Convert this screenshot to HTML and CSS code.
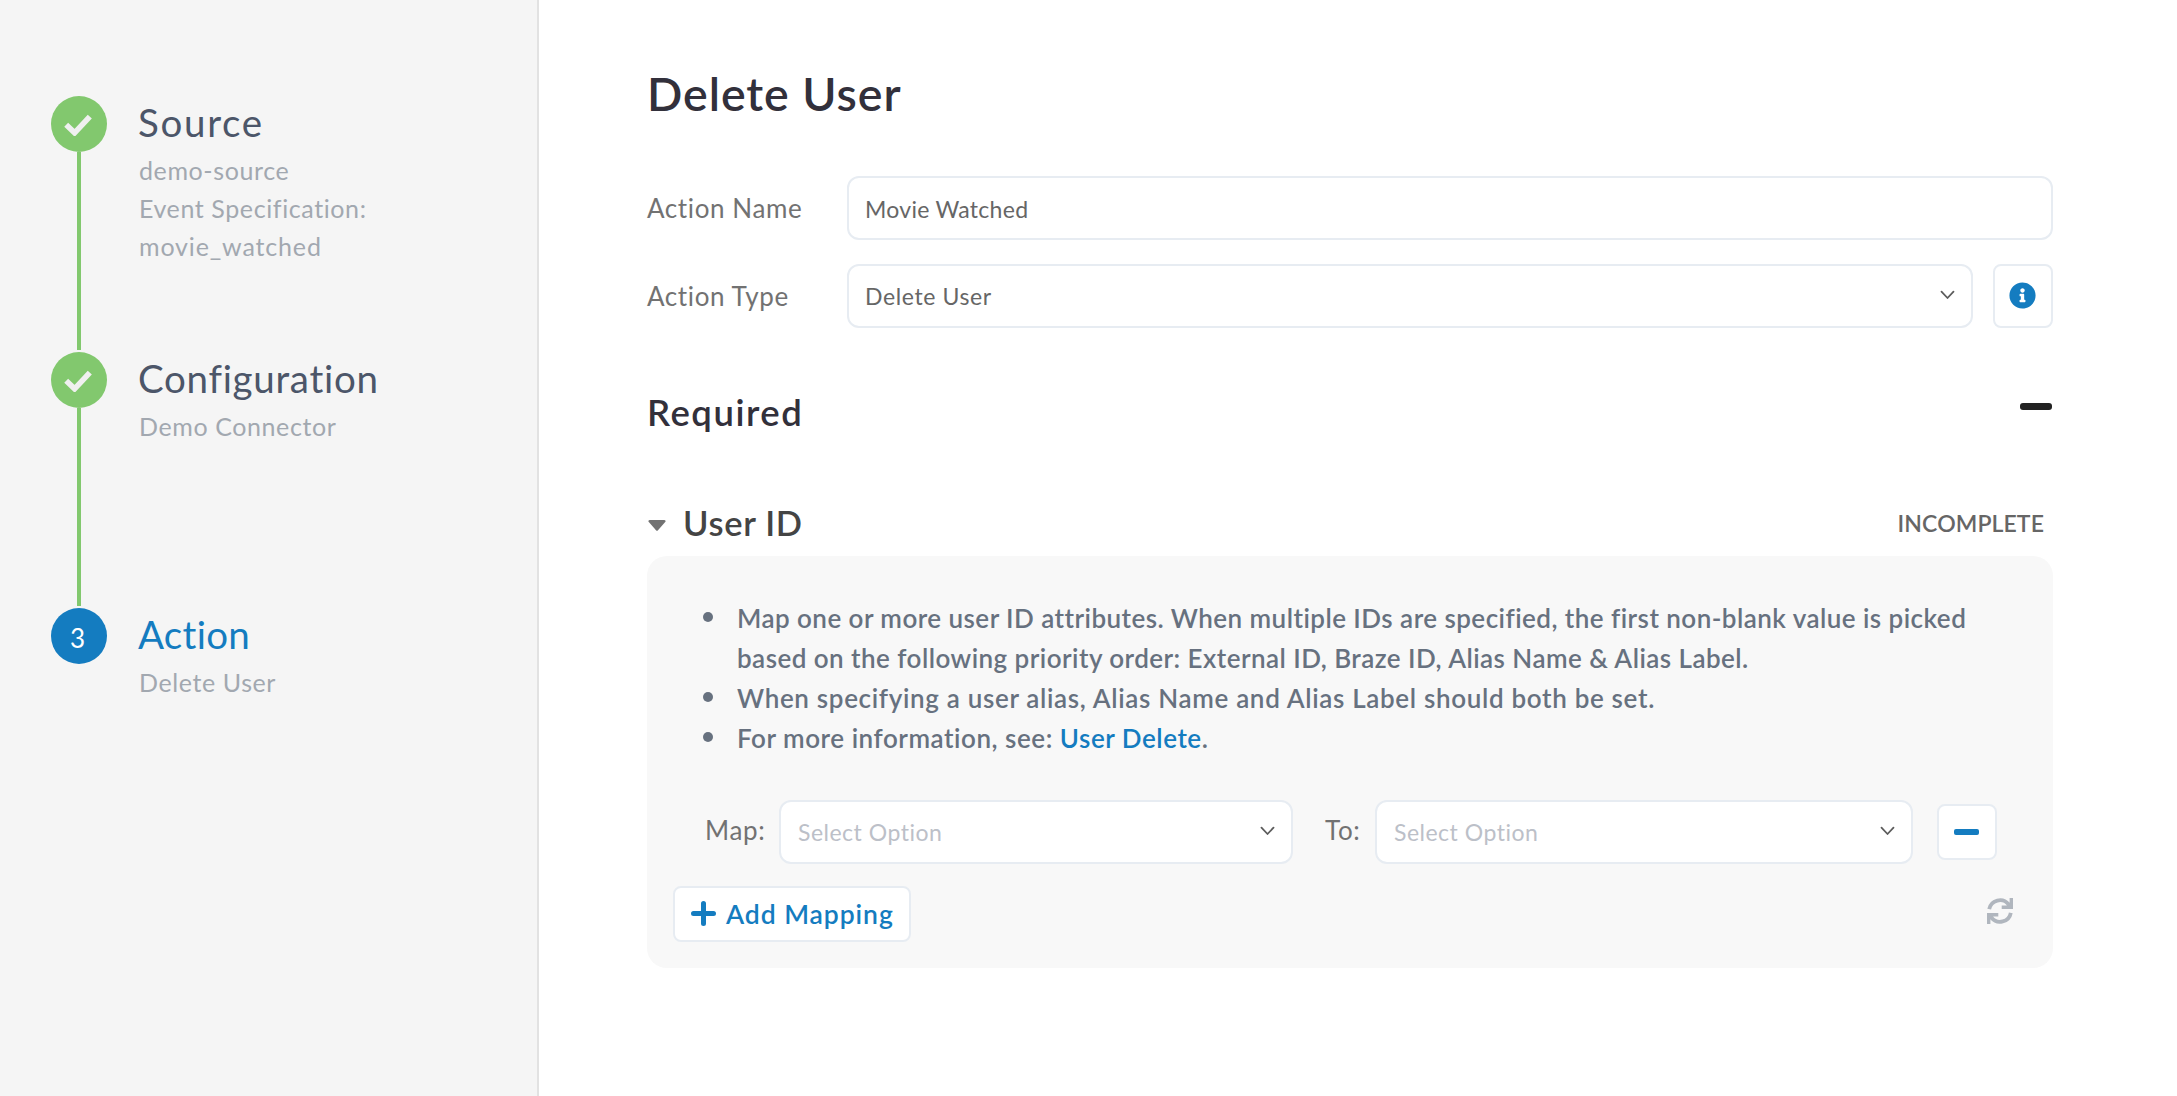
FILE: index.html
```html
<!DOCTYPE html>
<html lang="en">
<head>
<meta charset="utf-8">
<title>Delete User</title>
<link rel="stylesheet" href="styles.css">
</head>
<body>
<div class="page">
  <aside class="sidebar">
    <div class="step">
      <div class="step-track">
        <div class="step-marker"><svg class="check" viewBox="0 0 28 22"><path d="M2.200 10.800 L10.600 18.800 L25.800 2.600"/></svg></div>
        <div class="step-line"></div>
      </div>
      <div class="step-body">
        <h2 class="step-title title-source">Source</h2>
        <p class="step-sub">demo-source<br>Event Specification:<br><span class="sub-wide">movie_watched</span></p>
      </div>
    </div>
    <div class="step">
      <div class="step-track">
        <div class="step-marker"><svg class="check" viewBox="0 0 28 22"><path d="M2.200 10.800 L10.600 18.800 L25.800 2.600"/></svg></div>
        <div class="step-line"></div>
      </div>
      <div class="step-body">
        <h2 class="step-title">Configuration</h2>
        <p class="step-sub">Demo Connector</p>
      </div>
    </div>
    <div class="step step-current">
      <div class="step-track">
        <div class="step-marker"><span class="step-number">3</span></div>
      </div>
      <div class="step-body">
        <h2 class="step-title title-action">Action</h2>
        <p class="step-sub">Delete User</p>
      </div>
    </div>
  </aside>

  <main class="main">
    <h1 class="heading">Delete User</h1>

    <div class="form-row">
      <label class="label">Action Name</label>
      <div class="field"><span class="value value-name">Movie Watched</span></div>
    </div>
    <div class="form-row">
      <label class="label">Action Type</label>
      <div class="field">
        <span class="value">Delete User</span>
        <svg class="chevron" viewBox="0 0 15 10"><path d="M1.500 1.700 L7.500 8 L13.500 1.700"/></svg>
      </div>
      <button class="info-button">
        <svg class="info" viewBox="0 0 512 512"><path d="M256 8C119 8 8 119 8 256s111 248 248 248 248-111 248-248S393 8 256 8zm0 110c23.200 0 42 18.800 42 42s-18.800 42-42 42-42-18.800-42-42 18.800-42 42-42zm56 254c0 6.600-5.400 12-12 12h-88c-6.600 0-12-5.400-12-12v-24c0-6.600 5.400-12 12-12h12v-64h-12c-6.600 0-12-5.400-12-12v-24c0-6.600 5.400-12 12-12h64c6.600 0 12 5.400 12 12v100h12c6.600 0 12 5.400 12 12v24z"/></svg>
      </button>
    </div>

    <div class="section-header">
      <h2 class="section-title">Required</h2>
      <span class="collapse"></span>
    </div>

    <div class="group-header">
      <svg class="caret" viewBox="0 0 18 11"><path d="M1.600 0 H16.400 Q18.400 0.500 17.200 2 L10 10.300 Q9 11.400 8 10.300 L0.800 2 Q-0.400 0.500 1.600 0 Z"/></svg>
      <h3 class="group-title">User ID</h3>
      <span class="status">INCOMPLETE</span>
    </div>

    <section class="panel">
      <ul class="notes">
        <li>Map one or more user ID attributes. When multiple IDs are specified, the first non-blank value is picked<br>based on the following priority order: External ID, Braze ID, Alias Name &amp; Alias Label.</li>
        <li class="note-wide">When specifying a user alias, Alias Name and Alias Label should both be set.</li>
        <li class="note-link">For more information, see: <a class="link" href="#">User Delete</a>.</li>
      </ul>
      <div class="map-row">
        <label class="map-label">Map:</label>
        <div class="field field-map">
          <span class="placeholder">Select Option</span>
          <svg class="chevron" viewBox="0 0 15 10"><path d="M1.500 1.700 L7.500 8 L13.500 1.700"/></svg>
        </div>
        <label class="map-label label-to">To:</label>
        <div class="field field-to">
          <span class="placeholder">Select Option</span>
          <svg class="chevron" viewBox="0 0 15 10"><path d="M1.500 1.700 L7.500 8 L13.500 1.700"/></svg>
        </div>
        <button class="remove-button"><span class="minus"></span></button>
      </div>
      <div class="panel-footer">
        <button class="add-button">
          <svg class="plus" viewBox="0 0 25 25"><path d="M12.500 2.500 V22.500 M2.500 12.500 H22.500"/></svg>
          <span class="add-text">Add Mapping</span>
        </button>
        <svg class="refresh" viewBox="0 0 28 28"><path class="arc" d="M3.200 12.200 A11 11 0 0 1 22.500 7.200 M24.800 15.800 A11 11 0 0 1 5.500 20.800"/><path class="head" d="M27 1 V12 H15.700 V8.600 H20.500 L23.600 5.500 V1 Z M1 27 V16 H12.300 V19.400 H7.500 L4.400 22.500 V27 Z"/></svg>
      </div>
    </section>
  </main>
</div>
</body>
</html>
```
FILE: styles.css
```css
* { box-sizing: border-box; }

body {
  margin: 0;
  background: #fff;
  font-family: "Lato", "Open Sans", sans-serif;
  font-variant-ligatures: none;
}

h1, h2, h3, p, ul { margin: 0; padding: 0; }
button { padding: 0; font: inherit; background: #fff; }

.page { display: flex; height: 1096px; }

/* Progress sidebar */
.sidebar {
  width: 539px;
  padding: 96px 0 0 51px;
  background: #f5f5f5;
  border-right: 2px solid #e2e2e2;
}
.step { display: flex; gap: 31px; height: 256px; }
.step-track { display: flex; flex-direction: column; align-items: center; width: 56px; }
.step-marker {
  display: flex;
  align-items: center;
  justify-content: center;
  width: 56px;
  height: 56px;
  border-radius: 50%;
  background: #82c86e;
}
.step-current .step-marker { background: #147cc0; }
.step-line { width: 4px; height: 198px; background: #82c86e; }
.check { width: 28px; height: 22px; margin: 2px 2px 0 0; }
.check path { fill: none; stroke: #f0f0f0; stroke-width: 5.6; }
.step-number { padding: 4px 3px 0 0; color: #fff; font-size: 26px; line-height: 32px; }
.step-body { padding-top: 2px; }
.step-title {
  color: #4c5669;
  font-size: 38.5px;
  font-weight: 400;
  line-height: 48px;
  letter-spacing: 0.7px;
}
.title-source { letter-spacing: 1.7px; }
.title-action { letter-spacing: 0.3px; }
.step-current .step-title { color: #147cc0; }
.step-sub {
  margin-top: 5px;
  padding-left: 1px;
  color: #a2a8b0;
  font-size: 25px;
  line-height: 38px;
  letter-spacing: 0.6px;
}
.sub-wide { letter-spacing: 0.85px; }

/* Main form */
.main { flex: 1; padding: 63px 124px 0 108px; }
.heading {
  margin-bottom: 53px;
  color: #32303b;
  font-size: 46.5px;
  font-weight: 600;
  line-height: 60px;
  letter-spacing: 0.95px;
}
.form-row { display: flex; align-items: center; margin-bottom: 24px; }
.label {
  width: 200px;
  color: #727272;
  font-size: 26px;
  line-height: 40px;
  letter-spacing: 0.6px;
}
.field {
  display: flex;
  flex: 1;
  align-items: center;
  justify-content: space-between;
  height: 64px;
  padding: 0 16px;
  border: 2px solid #e7ecf2;
  border-radius: 12px;
  background: #fff;
}
.value { color: #666; font-size: 23px; line-height: 30px; letter-spacing: 0.62px; }
.value-name { padding-top: 2px; letter-spacing: 0.28px; }
.chevron { width: 15px; height: 10px; margin-bottom: 2px; }
.chevron path { fill: none; stroke: #5c5c5c; stroke-width: 1.8; stroke-linecap: round; stroke-linejoin: round; }
.info-button {
  display: flex;
  align-items: center;
  justify-content: center;
  width: 60px;
  height: 64px;
  margin-left: 20px;
  border: 2px solid #e7ecf2;
  border-radius: 8px;
}
.info { width: 27px; height: 27px; margin: 0 1px 1px 0; fill: #147cc0; }

.section-header { display: flex; justify-content: space-between; margin-top: 60px; }
.section-title {
  color: #32303b;
  font-size: 36.5px;
  font-weight: 600;
  line-height: 48px;
  letter-spacing: 1.5px;
}
.collapse { width: 32px; height: 7px; margin: 15px 1px 0 0; border-radius: 3px; background: #222; }

.group-header { display: flex; align-items: center; height: 40px; margin: 67px 0 13px; }
.caret { width: 18px; height: 11px; margin: 4px 17px 0 1px; fill: #727272; }
.group-title {
  flex: 1;
  color: #444;
  font-size: 34.5px;
  font-weight: 600;
  line-height: 40px;
  letter-spacing: 0.7px;
}
.status { margin-right: 9px; color: #666; font-size: 23px; font-weight: 600; line-height: 40px; letter-spacing: 0.1px; }

/* Mapping panel */
.panel { height: 412px; padding: 42px 37px 26px 26px; border-radius: 20px; background: #f8f8f8; }
.notes {
  color: #67717f;
  font-size: 26px;
  font-weight: 600;
  line-height: 40px;
  letter-spacing: 0.46px;
  list-style: none;
}
.notes li { padding-left: 64px; white-space: nowrap; }
.notes li::before {
  content: "";
  float: left;
  width: 10px;
  height: 10px;
  margin: 14px 0 0 -34px;
  border-radius: 50%;
  background: #67717f;
}
.notes .note-wide { letter-spacing: 0.67px; }
.notes .note-link { letter-spacing: 0.54px; }
.link { color: #147cc0; text-decoration: none; }

.map-row { display: flex; align-items: center; margin-top: 42px; padding-left: 31px; }
.map-label {
  width: 75px;
  padding: 0 0 4px 1px;
  color: #727272;
  font-size: 26px;
  line-height: 40px;
  letter-spacing: 0.7px;
}
.label-to { width: 51px; margin-left: 31px; }
.field-map { flex: none; width: 514px; }
.field-to { flex: none; width: 538px; }
.placeholder { padding-left: 1px; color: #bcc0c8; font-size: 23px; line-height: 30px; letter-spacing: 0.5px; }
.remove-button {
  display: flex;
  align-items: center;
  justify-content: center;
  width: 60px;
  height: 56px;
  margin-left: 24px;
  border: 2px solid #e7ecf2;
  border-radius: 8px;
}
.minus { width: 25px; height: 6px; margin: 0 2px 1px 0; border-radius: 2px; background: #147cc0; }

.panel-footer { display: flex; justify-content: space-between; margin-top: 22px; }
.add-button {
  display: flex;
  align-items: center;
  width: 238px;
  height: 56px;
  padding-left: 16px;
  border: 2px solid #e7ecf2;
  border-radius: 8px;
}
.plus { width: 25px; height: 25px; margin: 0 10px 2px 0; }
.plus path { fill: none; stroke: #147cc0; stroke-width: 5; stroke-linecap: round; }
.add-text { color: #147cc0; font-size: 26.5px; font-weight: 600; line-height: 40px; letter-spacing: 0.94px; }
.refresh { width: 28px; height: 28px; margin: 11px 2px 0 0; }
.refresh .arc { fill: none; stroke: #b0b6be; stroke-width: 3.8; }
.refresh .head { fill: #b0b6be; }
```
